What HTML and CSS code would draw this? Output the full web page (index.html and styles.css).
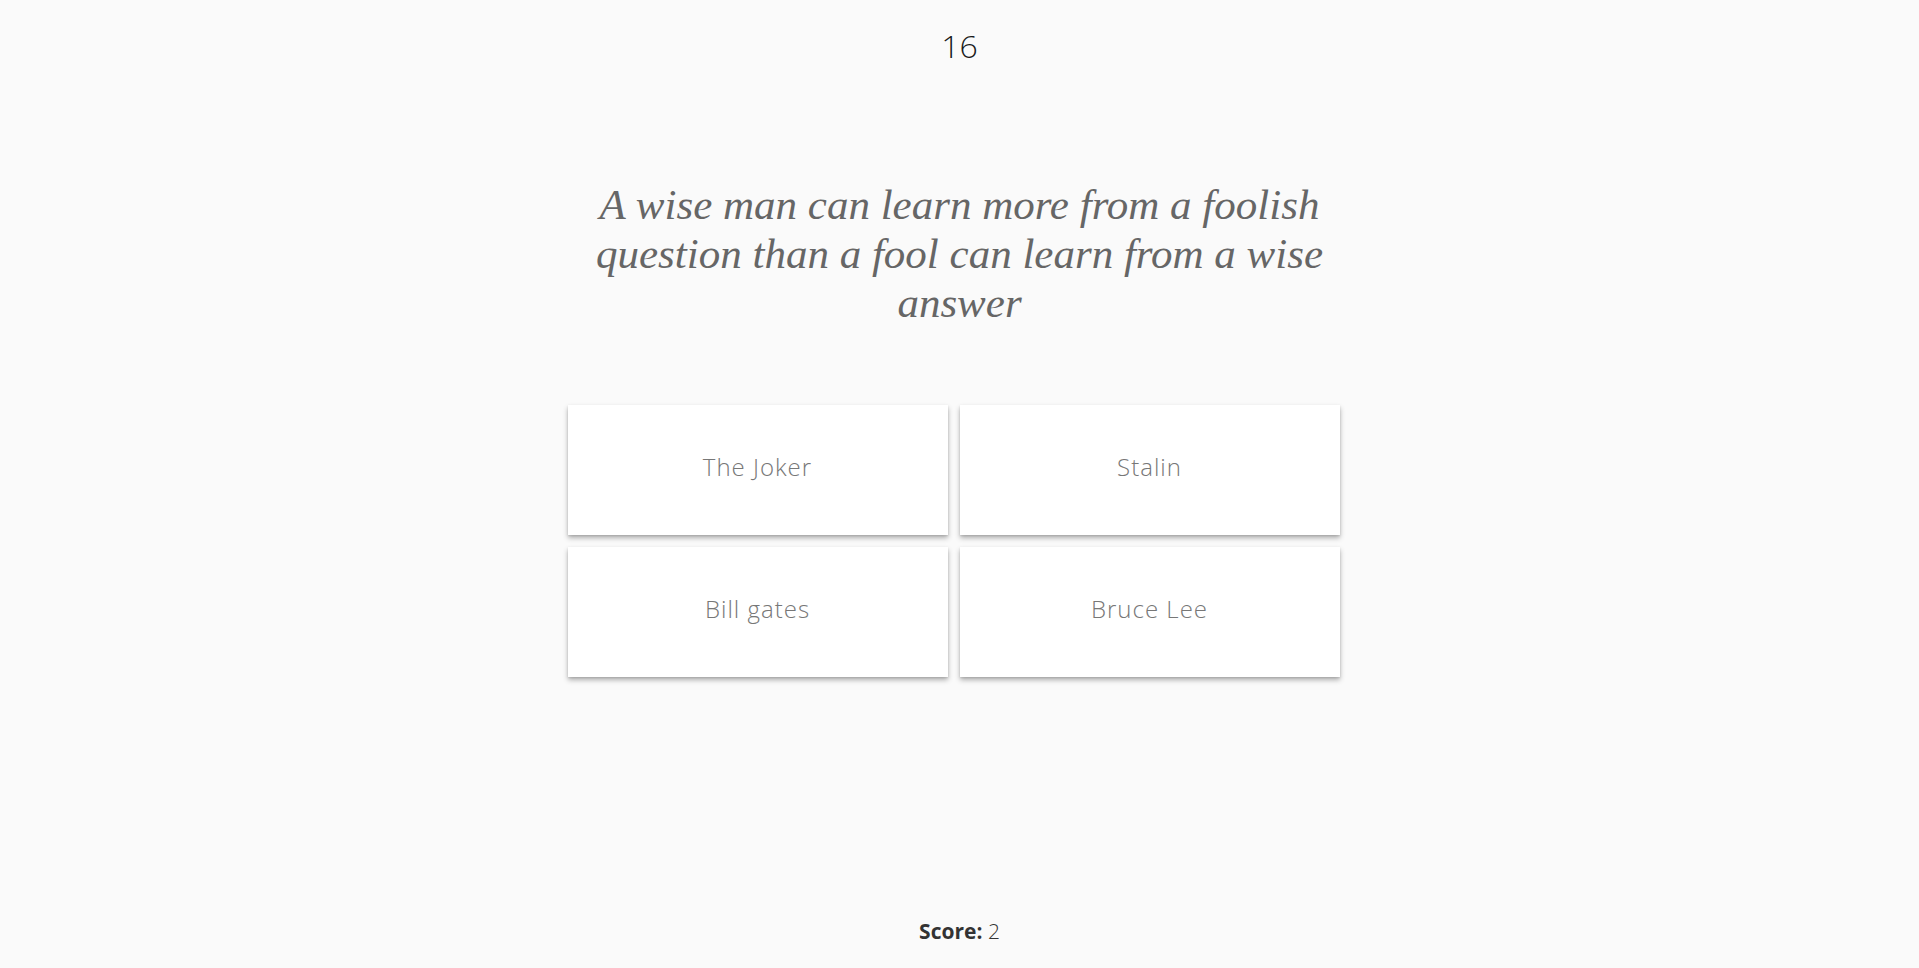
FILE: index.html
```html
<!DOCTYPE html>
<html lang="en">
<head>
<meta charset="utf-8">
<title>Quote Quiz</title>
<link rel="stylesheet" href="styles.css">
</head>
<body>
<div class="page">
  <header class="counter">16</header>
  <main class="quiz">
    <blockquote class="quote">A wise man can learn more from a foolish question than a fool can learn from a wise answer</blockquote>
    <div class="answers">
      <button class="answer">The Joker</button>
      <button class="answer">Stalin</button>
      <button class="answer">Bill gates</button>
      <button class="answer">Bruce Lee</button>
    </div>
  </main>
  <footer class="score"><strong>Score:</strong> 2</footer>
</div>
</body>
</html>
```
FILE: styles.css
```css
html, body {
  margin: 0;
  padding: 0;
  background: #fafafa;
}
.page {
  min-height: 968px;
  box-sizing: border-box;
  display: flex;
  flex-direction: column;
  align-items: center;
  font-family: "Open Sans", "Liberation Sans", sans-serif;
}
.counter {
  margin-top: 24px;
  font-size: 32px;
  font-weight: 300;
  color: #1a1a1a;
  line-height: 44px;
}
.quiz {
  width: 784px;
  display: flex;
  flex-direction: column;
  align-items: stretch;
}
.quote {
  margin: 112px 0 0 0;
  font-family: "Liberation Serif", "Times New Roman", serif;
  font-style: italic;
  font-size: 43px;
  line-height: 49px;
  color: #666;
  text-align: center;
}
.answers {
  margin-top: 78px;
  padding-right: 12px;
  display: grid;
  grid-template-columns: 1fr 1fr;
  gap: 12px 12px;
}
.answer {
  height: 130px;
  padding: 0 0 7px 0;
  border: none;
  background: #fff;
  box-shadow: 0 3px 5px rgba(0,0,0,0.3), 0 1px 2px rgba(0,0,0,0.1);
  font-family: "Open Sans", "Liberation Sans", sans-serif;
  font-weight: 300;
  font-size: 24px;
  letter-spacing: 1px;
  color: #777;
  cursor: pointer;
}
.score {
  margin-top: auto;
  margin-bottom: 23px;
  font-size: 21px;
  color: #333;
  font-weight: 300;
}
.score strong {
  font-weight: 700;
}
```
